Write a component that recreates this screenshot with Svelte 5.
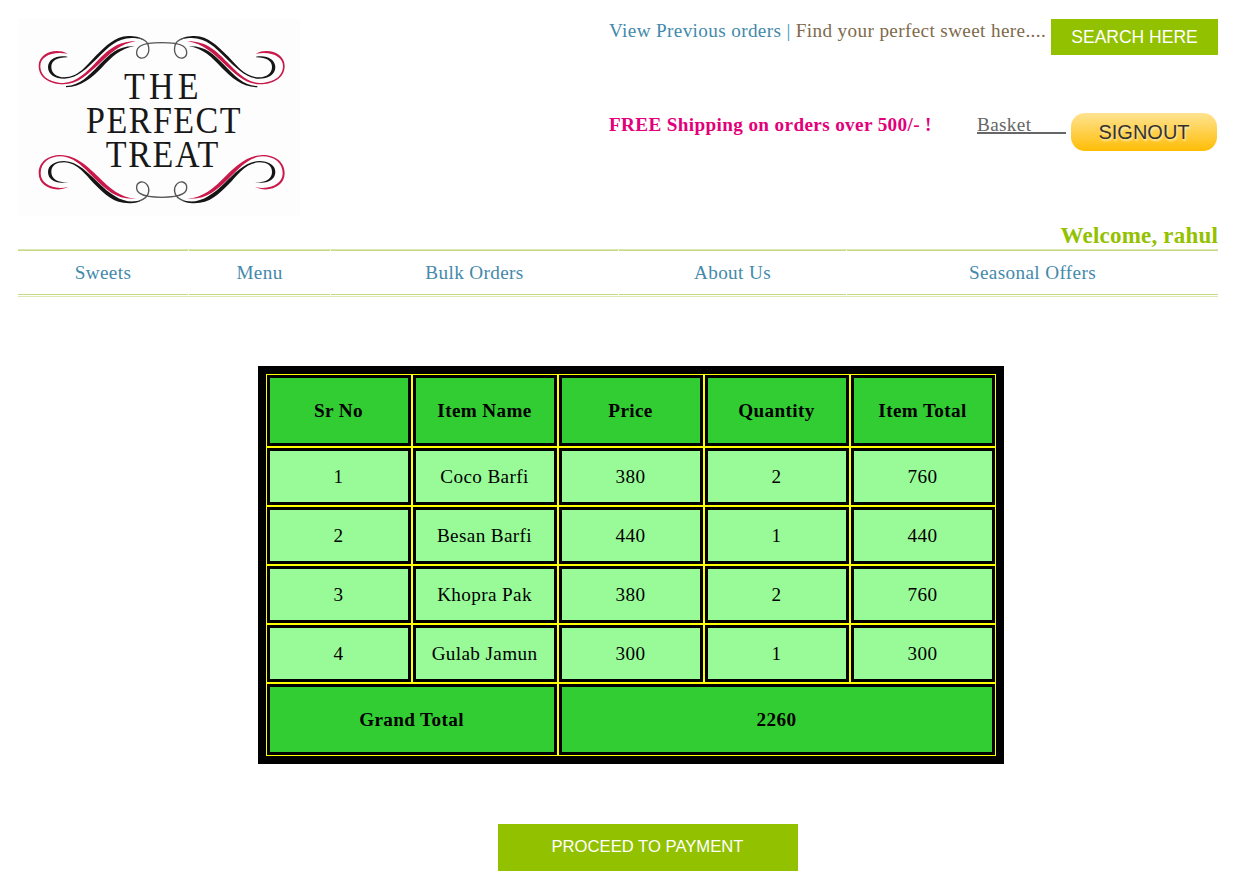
<script>
  const nav = [
    { label: 'Sweets', width: 170 },
    { label: 'Menu', width: 141 },
    { label: 'Bulk Orders', width: 287 },
    { label: 'About Us', width: 227 },
    { label: 'Seasonal Offers', width: 371 }
  ];
  const columns = ['Sr No', 'Item Name', 'Price', 'Quantity', 'Item Total'];
  const items = [
    [1, 'Coco Barfi', 380, 2],
    [2, 'Besan Barfi', 440, 1],
    [3, 'Khopra Pak', 380, 2],
    [4, 'Gulab Jamun', 300, 1]
  ];
  const total = items.reduce((sum, i) => sum + i[2] * i[3], 0);
</script>

<div class="page">
  <header>
    <svg class="logo" viewBox="24 27 846 591" width="282" height="197">
      <defs>
        <g id="upper">
          <path fill="#151515" d="M172 140C140 134 114 148 114 171C114 194 135 206 163 206C203 206 233 172 262 145C297 110 320 85 365 84C385 84 395 88 402 92C390 80 375 78 355 78C315 80 290 105 256 139C230 166 205 202 163 202C140 202 124 190 124 171C124 152 140 143 172 142Z" />
          <path fill="#c9184a" d="M173 131C135 112 86 130 86 168C86 205 122 223 160 223C205 223 235 190 264 165C300 132 330 100 378 94C322 93 292 122 258 157C230 186 200 218 160 219C125 218 91 203 91 168C91 140 125 122 173 131Z" />
          <path fill="#151515" d="M168 232C215 230 245 203 275 173C305 142 330 115 374 109C325 107 300 132 268 164C235 198 210 226 168 228Z" />
          <path class="thread" d="M385 83C406 89 416 98 416 112C419 132 406 147 392 144C375 139 377 117 391 108C407 98 431 98 456 98" />
        </g>
        <g id="lower">
          <path fill="#c9184a" d="M175 531C135 550 86 530 86 490C86 455 115 435 152 435C200 436 235 472 265 500C300 535 330 562 378 566C320 570 292 542 256 508C228 480 195 440 152 439C118 439 92 458 92 490C92 522 130 541 175 531Z" />
          <path fill="#151515" d="M175 516C140 524 114 510 114 486C114 465 135 453 162 453C205 455 235 490 265 518C300 552 335 578 375 574C392 572 398 569 403 565C392 576 375 580 357 580C310 580 285 553 254 523C228 496 203 458 162 457C140 457 124 466 124 486C124 508 145 519 175 516Z" />
          <path class="thread" d="M385 574C406 567 415 558 416 545C419 528 406 513 392 516C375 521 377 543 391 551C407 561 431 562 456 562" />
        </g>
      </defs>
      <rect x="24" y="27" width="846" height="591" fill="#fdfdfd" />
      <use href="#upper" />
      <use href="#lower" />
      <use href="#upper" transform="translate(910 0) scale(-1 1)" />
      <use href="#lower" transform="translate(910 0) scale(-1 1)" />
      <text transform="translate(342 267) scale(.88 1)" textLength="254">THE</text>
      <text transform="translate(228 369) scale(.88 1)" textLength="527">PERFECT</text>
      <text transform="translate(287 471) scale(.88 1)" textLength="384">TREAT</text>
    </svg>
    <div class="tools">
      <div class="search">
        <span class="links"><a href="#orders">View Previous orders</a><i>{' | '}</i>Find your perfect sweet here....</span>
        <button class="find">SEARCH HERE</button>
      </div>
      <div class="account">
        <strong>FREE Shipping on orders over 500/- !</strong>
        <a class="basket" href="#basket">Basket</a>
        <button class="signout">SIGNOUT</button>
      </div>
      <div class="welcome">Welcome, rahul</div>
    </div>
  </header>
  <nav>
    {#each nav as item}
      <a href="#menu" style="width: {item.width}px">{item.label}</a>
    {/each}
  </nav>
  <main>
    <div class="orders">
      {#each columns as column}
        <div class="cell head">{column}</div>
      {/each}
      {#each items as item}
        {#each [...item, item[2] * item[3]] as value}
          <div class="cell">{value}</div>
        {/each}
      {/each}
      <div class="cell head label">Grand Total</div>
      <div class="cell head sum">{total}</div>
    </div>
    <button class="pay">PROCEED TO PAYMENT</button>
  </main>
</div>

<style>
  :global(body) { background: #fff; }
  .page {
    width: 1200px;
    padding: 19px 0 0 18px;
    font: 19.2px/22px 'Liberation Serif', 'Times New Roman', serif;
    letter-spacing: 0.36px;
  }
  a { color: #4389ab; text-decoration: none; }
  button {
    border: 0;
    padding: 0;
    font-family: 'Liberation Sans', Arial, sans-serif;
    color: #fff;
    background: #92c100;
  }
  header { display: flex; justify-content: space-between; height: 230px; }
  .logo { display: block; flex: none; }
  .logo text { font: 116px 'Liberation Serif', serif; letter-spacing: 0; fill: #181818; }
  .thread { fill: none; stroke: #555; stroke-width: 4; }
  .tools { display: flex; flex-direction: column; width: 609px; }
  .search { display: flex; justify-content: space-between; height: 94px; color: #7e6a4b; }
  .links { white-space: pre; line-height: 24px; }
  i { color: #3b9ac5; font-style: normal; }
  .find { width: 167px; height: 36px; padding-top: 1px; font-size: 17.5px; }
  .account { display: flex; height: 110px; line-height: 24px; }
  strong { width: 368px; color: #e2007a; white-space: nowrap; }
  .basket { width: 89px; height: 19px; color: #666; border-bottom: 2px solid #666; }
  .signout {
    width: 146px;
    height: 38px;
    margin-left: 5px;
    padding-top: 1px;
    border-radius: 14px;
    background: linear-gradient(#ffe391, #ffbd05);
    color: #333;
    font-size: 20px;
    text-shadow: 1px 2px 2px #fff9;
  }
  .welcome { text-align: right; color: #92c100; font-size: 23px; line-height: 25px; font-weight: bold; letter-spacing: 0.2px; }
  nav {
    display: flex;
    gap: 1px;
    box-sizing: border-box;
    height: 48px;
    padding: 0 0 1px;
    border: solid #dce8b4;
    border-width: 1px 0;
  }
  nav a { box-sizing: border-box; border: solid #c3d985; border-width: 1px 0; line-height: 43px; text-align: center; }
  main { display: flex; flex-direction: column; align-items: flex-start; }
  .orders {
    display: grid;
    grid-template-columns: repeat(5, 146px);
    grid-template-rows: 73px repeat(4, 59px) 73px;
    margin: 69px 0 60px 240px;
    border: 8px solid #000;
  }
  .cell {
    display: flex;
    align-items: center;
    justify-content: center;
    padding-right: 1px;
    border: 1px solid #ff0;
    background: #98fb98;
    box-shadow: inset 0 0 0 3px #000;
    color: #000;
  }
  .head { background: #32cd32; font-weight: bold; }
  .label { grid-column: span 2; }
  .sum { grid-column: span 3; }
  .pay { width: 300px; height: 47px; margin-left: 480px; padding: 0 1px 2px 0; font-size: 16.65px; }
</style>
